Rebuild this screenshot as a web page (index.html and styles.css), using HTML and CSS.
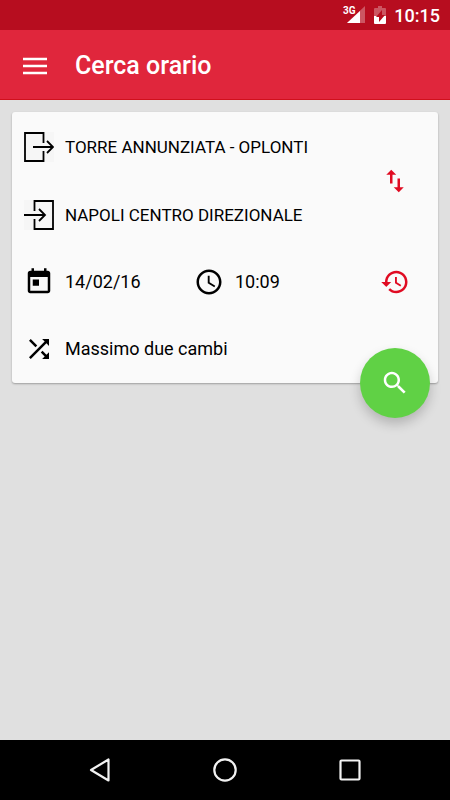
FILE: index.html
```html
<!DOCTYPE html>
<html lang="it">

<head>
    <meta charset="UTF-8">
    <meta name="viewport" content="width=device-width, initial-scale=1.0">
    <title>Cerca orario</title>
    <link rel="stylesheet" href="styles.css">
</head>

<body>
    <div class="status-bar">
        <svg class="signal" width="24" height="20" viewBox="0 0 24 20">
            <text x="1" y="9" class="signal-text">3G</text>
            <path d="M23 1v17H5z" fill="#fff" fill-opacity="0.3" />
            <path d="M18 6v12H5z" fill="#fff" />
        </svg>
        <svg class="battery" width="12" height="18" viewBox="0 0 12 18">
            <path d="M4 0h4v2h3q1 0 1 1v7H0V3q0-1 1-1h3z" fill="#fff" fill-opacity="0.3" />
            <path d="M0 10h12v7q0 1-1 1H1q-1 0-1-1z" fill="#fff" />
            <path d="M8 4v5h3l-6 7v-5H2z" fill="#b70d1f" />
        </svg>
        <span class="time">10:15</span>
    </div>

    <header>
        <button class="menu" aria-label="Menu">
            <svg width="24" height="18" viewBox="0 0 24 18">
                <path d="M0 2h24M0 9h24M0 16h24" stroke="#fff" stroke-width="2.4" />
            </svg>
        </button>
        <h1>Cerca orario</h1>
    </header>

    <main>
        <div class="card">
            <div class="stations">
                <div class="station-list">
                    <button class="field">
                        <svg class="icon" viewBox="0 0 30 30">
                            <path d="M0 0h30v30H0z" fill="#f6f6f6" />
                            <path d="M19.500 11V1H1v28h18.500V19M9 15h20M23 9l6 6-6 6" fill="none" stroke="#000" stroke-width="1.8" />
                        </svg>
                        <span>TORRE ANNUNZIATA - OPLONTI</span>
                    </button>
                    <button class="field">
                        <svg class="icon" viewBox="0 0 30 30">
                            <path d="M0 0h30v30H0z" fill="#f6f6f6" />
                            <path d="M10.500 11V1H29v28H10.500V19M0 15h21M15 9l6 6-6 6" fill="none" stroke="#000" stroke-width="1.8" />
                        </svg>
                        <span>NAPOLI CENTRO DIREZIONALE</span>
                    </button>
                </div>
                <button class="action" aria-label="Inverti stazioni">
                    <svg class="icon" viewBox="0 0 24 24">
                        <path d="M16 17.01V10h-2v7.01h-3L15 21l4-3.99h-3zM9 3L5 6.99h3V14h2V6.99h3L9 3z" />
                    </svg>
                </button>
            </div>
            <div class="when">
                <button class="field">
                    <svg class="icon" viewBox="0 0 24 24">
                        <path d="M19 3h-1V1h-2v2H8V1H6v2H5c-1.11 0-1.99.9-1.99 2L3 19c0 1.1.89 2 2 2h14c1.1 0 2-.9 2-2V5c0-1.1-.9-2-2-2zm0 16H5V8h14v11zM7 10h5v5H7z" />
                    </svg>
                    <span>14/02/16</span>
                </button>
                <button class="field">
                    <svg class="icon" viewBox="0 0 24 24">
                        <path d="M11.99 2C6.47 2 2 6.48 2 12s4.47 10 9.99 10C17.52 22 22 17.52 22 12S17.52 2 11.99 2zM12 20c-4.42 0-8-3.58-8-8s3.58-8 8-8 8 3.58 8 8-3.58 8-8 8zm.5-13H11v6l5.25 3.15.75-1.23-4.5-2.67z" />
                    </svg>
                    <span>10:09</span>
                </button>
                <button class="action" aria-label="Adesso">
                    <svg class="icon" viewBox="0 0 24 24">
                        <path d="M13 3c-4.97 0-9 4.03-9 9H1l3.89 3.89.07.14L9 12H6c0-3.87 3.13-7 7-7s7 3.13 7 7-3.13 7-7 7c-1.93 0-3.68-.79-4.94-2.06l-1.42 1.42C8.27 19.99 10.51 21 13 21c4.97 0 9-4.03 9-9s-4.03-9-9-9zm-1 5v5l4.28 2.54.72-1.21-3.5-2.08V8H12z" />
                    </svg>
                </button>
            </div>
            <button class="field">
                <svg class="icon" viewBox="0 0 24 24">
                    <path d="M10.59 9.17L5.41 4 4 5.41l5.17 5.17 1.42-1.41zM14.5 4l2.04 2.04L4 18.59 5.41 20 17.96 7.46 20 9.5V4h-5.5zm.33 9.41l-1.41 1.41 3.13 3.13L14.5 20H20v-5.5l-2.04 2.04-3.13-3.13z" />
                </svg>
                <span>Massimo due cambi</span>
            </button>
            <button class="search" aria-label="Cerca">
                <svg class="icon" viewBox="0 0 24 24">
                    <path d="M15.5 14h-.79l-.28-.27C15.41 12.59 16 11.11 16 9.5 16 5.91 13.09 3 9.5 3S3 5.91 3 9.5 5.91 16 9.5 16c1.61 0 3.09-.59 4.23-1.57l.27.28v.79l5 4.99L20.49 19l-4.99-5zm-6 0C7.01 14 5 11.99 5 9.5S7.01 5 9.5 5 14 7.01 14 9.5 11.99 14 9.5 14z" />
                </svg>
            </button>
        </div>
    </main>

    <nav>
        <button aria-label="Indietro">
            <svg width="26" height="26" viewBox="0 0 26 26">
                <path d="M21.500 2.500v21L4 13z" />
            </svg>
        </button>
        <button aria-label="Home">
            <svg width="26" height="26" viewBox="0 0 26 26">
                <circle cx="13" cy="13" r="10.700" />
            </svg>
        </button>
        <button aria-label="Recenti">
            <svg width="26" height="26" viewBox="0 0 26 26">
                <rect x="3.500" y="3.500" width="19" height="19" rx="1" />
            </svg>
        </button>
    </nav>
</body>

</html>
```
FILE: styles.css
```css
* {
    box-sizing: border-box;
}

body {
    font-family: Roboto, sans-serif;
    margin: 0;
    min-height: 100vh;
    display: flex;
    flex-direction: column;
    background-color: #e0e0e0;
    color: #000;
}

button {
    font: inherit;
    color: inherit;
    background: none;
    border: 0;
    margin: 0;
    padding: 0;
    cursor: pointer;
}

svg {
    display: block;
}

.status-bar {
    height: 30px;
    padding: 0 10px;
    display: flex;
    justify-content: flex-end;
    align-items: center;
    gap: 8px;
    background-color: #b70d1f;
    color: #fff;
}

.signal-text {
    font-size: 10px;
    font-weight: 700;
    fill: #fff;
}

.time {
    font-size: 18px;
    font-weight: 500;
}

header {
    height: 70px;
    padding: 2px 23px 0;
    display: flex;
    align-items: center;
    gap: 28px;
    background-color: #e0263c;
    border-bottom: 1px solid #d0101c;
    color: #fff;
}

h1 {
    margin: 0;
    font-size: 25px;
    font-weight: 500;
}

main {
    flex: 1;
    padding: 12px;
}

.card {
    position: relative;
    padding: 1px 0;
    background-color: #fafafa;
    border-radius: 3px;
    box-shadow: 0 1px 2px rgba(0, 0, 0, 0.3);
}

.stations,
.when {
    display: flex;
}

.station-list {
    flex: 1;
    display: flex;
    flex-direction: column;
    gap: 1px;
}

.field {
    height: 67px;
    width: 100%;
    padding-left: 12px;
    display: flex;
    align-items: center;
    gap: 11px;
    font-size: 18px;
    text-align: left;
}

.station-list .field {
    font-size: 17px;
}

.when .field {
    flex: 1;
}

.icon {
    width: 30px;
    height: 30px;
    flex: none;
}

.action {
    width: 86px;
    display: flex;
    justify-content: center;
    align-items: center;
    fill: #e00b22;
}

.search {
    position: absolute;
    right: 8px;
    bottom: -35px;
    width: 70px;
    height: 70px;
    display: flex;
    justify-content: center;
    align-items: center;
    border-radius: 50%;
    background-color: #60d145;
    fill: #fff;
    box-shadow: 0 6px 12px rgba(0, 0, 0, 0.2);
}

nav {
    height: 60px;
    display: flex;
    justify-content: center;
    background-color: #000;
}

nav button {
    width: 125px;
    display: flex;
    justify-content: center;
    align-items: center;
}

nav svg {
    fill: none;
    stroke: #f2f2f2;
    stroke-width: 2.2;
    stroke-linejoin: round;
}
```
